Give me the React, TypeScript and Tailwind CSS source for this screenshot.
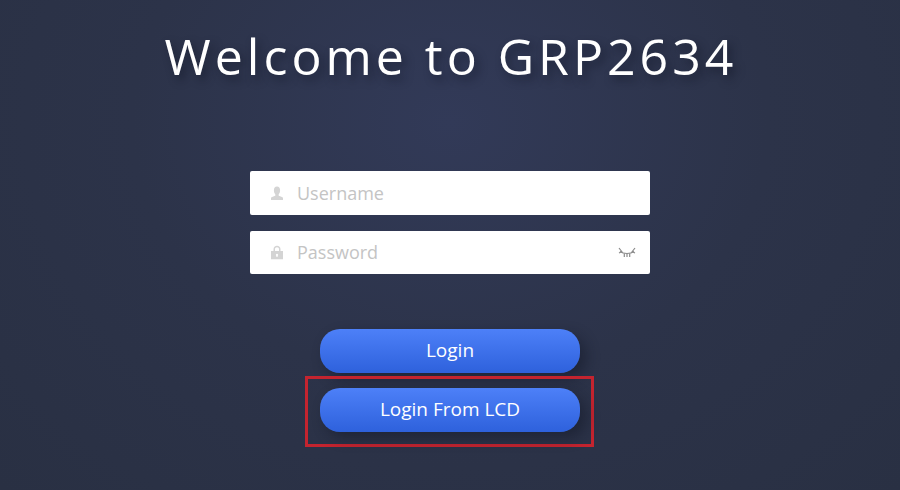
const FONT = 'font-["Open_Sans","Noto_Sans",sans-serif]'

function UserIcon() {
  return (
    <svg width="14" height="15" viewBox="0 0 14 15" fill="#d4d4d4">
      <path d="M7 0.500c2 0 3.100 1.600 3.100 3.800 0 1.800-.6 3.200-1.400 4v1.400c1.700.6 3.900 1.100 4.300 2.100v2.200H1v-2.200c.4-1 2.600-1.500 4.300-2.100V8.300c-.8-.8-1.400-2.200-1.400-4C3.900 2.100 5 .5 7 .5z" />
    </svg>
  )
}

function LockIcon() {
  return (
    <svg width="14" height="15" viewBox="0 0 14 15" fill="#d4d4d4">
      <path fillRule="evenodd" d="M3.500 6V4.200C3.500 2 5 .8 7 .8s3.500 1.200 3.500 3.400V6H13v8.200H1V6h2.500zM5 6h4V4.200C9 3 8.200 2.300 7 2.300S5 3 5 4.200V6zm2 2.800a1.200 1.200 0 0 0-.6 2.200v1h1.200v-1A1.200 1.200 0 0 0 7 8.800z" />
    </svg>
  )
}

function EyeClosedIcon() {
  return (
    <svg width="18" height="12" viewBox="0 0 18 12" fill="none" stroke="#8a8a8a" strokeWidth="1.200">
      <path d="M2 4.500c2 1.500 4.300 2 7 2s5-.5 7-2" />
      <path d="M1 1l3.500 4.500M1 6l2.500-1.200M17 1l-3.500 4.500M17 6l-2.500-1.200M6.300 6.500V10M11.700 6.500V10M9 6.800V10" />
    </svg>
  )
}

function Field({ icon, placeholder, right, className }: { icon: React.ReactNode; placeholder: string; right?: React.ReactNode; className?: string }) {
  return (
    <div className={`flex items-center w-[400px] bg-white rounded-[2px] pl-[20px] pr-[14px] ${className}`}>
      <span className="flex justify-center w-[14px] shrink-0">{icon}</span>
      <span className="ml-[13px] flex-1 text-[18px] text-[#c4c4c4]">{placeholder}</span>
      {right}
    </div>
  )
}

function LoginButton({ label }: { label: string }) {
  return (
    <button className="block w-[260px] h-[44px] pb-[2px] rounded-[20px] bg-gradient-to-b from-[#4d80f8] to-[#2e61dc] text-white text-[19px] font-medium shadow-[6px_6px_14px_rgba(15,20,35,0.45)]">
      {label}
    </button>
  )
}

export default function App() {
  return (
    <div className={`w-[900px] h-[490px] overflow-hidden flex flex-col items-center bg-[radial-gradient(ellipse_at_50%_25%,#323a58_0%,#2c3349_50%,#293043_100%)] ${FONT}`}>
      <h1 className="mt-[21px] h-[70px] pl-[2px] leading-[70px] text-[50px] font-medium tracking-[4px] text-white [text-shadow:4px_5px_8px_rgba(15,20,35,0.5)]">
        Welcome to GRP2634
      </h1>
      <Field className="mt-[80px] h-[44px]" icon={<UserIcon />} placeholder="Username" />
      <Field className="mt-[16px] h-[43px]" icon={<LockIcon />} placeholder="Password" right={<EyeClosedIcon />} />
      <div className="mt-[55px]">
        <LoginButton label="Login" />
      </div>
      <div className="mt-[3px] mr-[1px] w-[289px] h-[71px] border-[3px] border-[#c4242f] pt-[9px] pl-[12px]">
        <LoginButton label="Login From LCD" />
      </div>
    </div>
  )
}
